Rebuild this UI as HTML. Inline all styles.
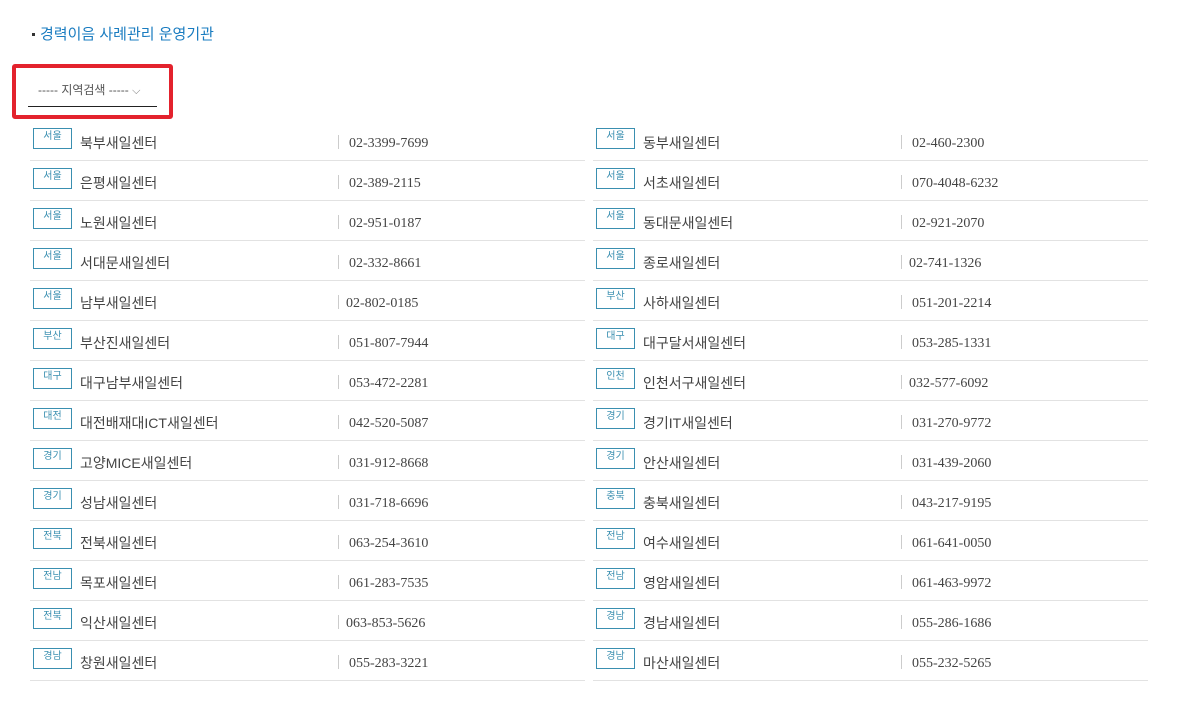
<!DOCTYPE html>
<html><head><meta charset="utf-8"><style>
body{margin:0;width:1183px;height:717px;background:#fff;position:relative;overflow:hidden;font-family:"Liberation Sans","Noto Sans CJK KR",sans-serif;}
.a{position:absolute;}
.title{left:40px;top:23px;font-size:15px;color:#1a7cc0;white-space:nowrap;}
.dot{left:32px;top:33px;width:3px;height:3px;background:#333;}
.red{left:12px;top:64px;width:153px;height:47px;border:4px solid #e3222d;border-radius:3px;}
.sel{left:38px;top:81px;font-size:12px;color:#555;white-space:nowrap;}
.ul{left:28px;top:106px;width:129px;height:1px;background:#222;}
.row{position:absolute;height:38px;border-bottom:1px solid #e2e2e2;}
.tag{position:absolute;left:3px;top:6px;width:37px;height:19px;border:1px solid #3a8fb0;color:#3a8fb0;font-size:10px;text-align:center;line-height:19px;}
.tag span{display:inline-block;line-height:10px;vertical-align:middle;position:relative;top:-1px;}
.nm{position:absolute;left:50px;top:11px;font-size:14px;color:#444;white-space:nowrap;}
.dv{position:absolute;left:308px;top:13px;width:1px;height:14px;background:#ccc;}
.ph{position:absolute;left:319px;top:14px;font-size:14px;color:#444;font-family:"Liberation Serif",serif;white-space:nowrap;line-height:16px;}
</style></head><body>
<div class="a dot"></div>
<div class="a title">경력이음 사례관리 운영기관</div>
<div class="a red"></div>
<div class="a sel">----- 지역검색 ----- <span style="font-size:11px;color:#777">⌵</span></div>
<div class="a ul"></div>
<div id="c"></div>
<script>
var L=[["서울","북부새일센터","02-3399-7699",0],["서울","은평새일센터","02-389-2115",0],["서울","노원새일센터","02-951-0187",0],["서울","서대문새일센터","02-332-8661",0],["서울","남부새일센터","02-802-0185",-3],["부산","부산진새일센터","051-807-7944",0],["대구","대구남부새일센터","053-472-2281",0],["대전","대전배재대ICT새일센터","042-520-5087",0],["경기","고양MICE새일센터","031-912-8668",0],["경기","성남새일센터","031-718-6696",0],["전북","전북새일센터","063-254-3610",0],["전남","목포새일센터","061-283-7535",0],["전북","익산새일센터","063-853-5626",-3],["경남","창원새일센터","055-283-3221",0]];
var R=[["서울","동부새일센터","02-460-2300",0],["서울","서초새일센터","070-4048-6232",0],["서울","동대문새일센터","02-921-2070",0],["서울","종로새일센터","02-741-1326",-3],["부산","사하새일센터","051-201-2214",0],["대구","대구달서새일센터","053-285-1331",0],["인천","인천서구새일센터","032-577-6092",-3],["경기","경기IT새일센터","031-270-9772",0],["경기","안산새일센터","031-439-2060",0],["충북","충북새일센터","043-217-9195",0],["전남","여수새일센터","061-641-0050",0],["전남","영암새일센터","061-463-9972",0],["경남","경남새일센터","055-286-1686",0],["경남","마산새일센터","055-232-5265",0]];
var h="";
function add(a,x,w){a.forEach(function(r,i){h+='<div class="row" style="left:'+x+'px;top:'+(122+i*40)+'px;width:'+w+'px"><div class="tag"><span>'+r[0]+'</span></div><div class="nm">'+r[1]+'</div><div class="dv"></div><div class="ph" style="margin-left:'+r[3]+'px">'+r[2]+'</div></div>';});}
add(L,30,555);add(R,593,555);
document.getElementById("c").innerHTML=h;
</script>
</body></html>
